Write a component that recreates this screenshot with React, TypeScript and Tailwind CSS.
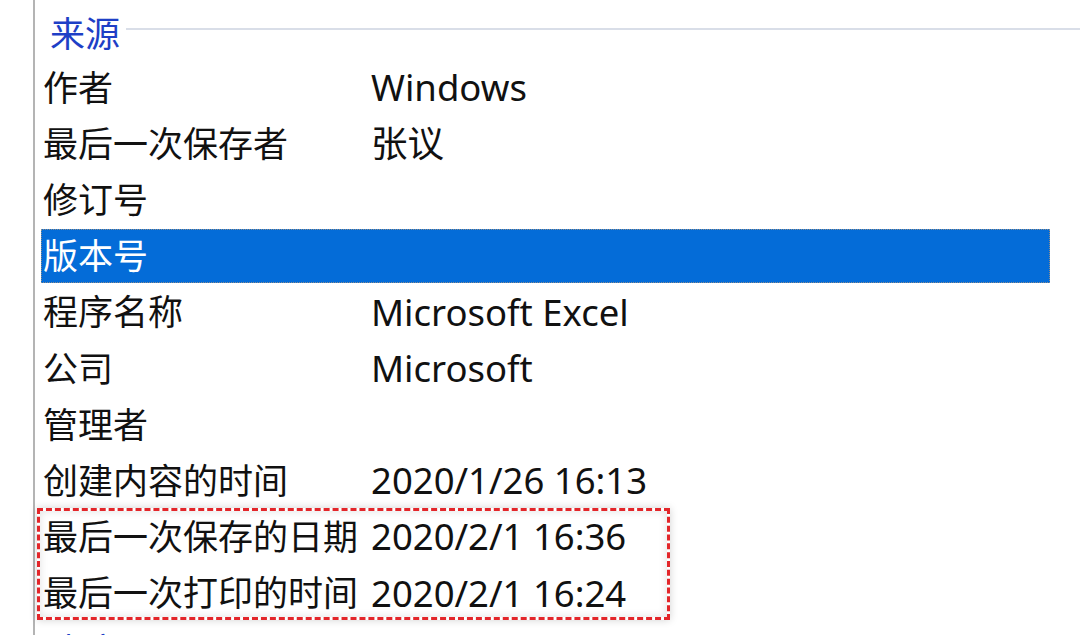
import React from 'react';

const rows: { label: string; value?: string; selected?: boolean }[] = [
  { label: '作者', value: 'Windows' },
  { label: '最后一次保存者', value: '张议' },
  { label: '修订号' },
  { label: '版本号', selected: true },
  { label: '程序名称', value: 'Microsoft Excel' },
  { label: '公司', value: 'Microsoft' },
  { label: '管理者' },
  { label: '创建内容的时间', value: '2020/1/26 16:13' },
];

const marked = [
  { label: '最后一次保存的日期', value: '2020/2/1 16:36' },
  { label: '最后一次打印的时间', value: '2020/2/1 16:24' },
];

const font = { fontFamily: '"Noto Sans", "Noto Sans CJK SC", sans-serif' };

const Row: React.FC<{ label: string; value?: string; selected?: boolean }> = ({ label, value, selected }) => (
  <div className="h-[56.2px] flex items-center">
    <div
      className={
        selected
          ? 'flex items-center w-full h-[54px] bg-[#046cd8] border border-dotted border-[#8c8c8c] text-white'
          : 'flex items-center w-full h-[54px] border border-transparent text-[#111111]'
      }
    >
      <span className="w-[329px] pl-[1px] shrink-0 whitespace-nowrap">{label}</span>
      {value && <span className="whitespace-nowrap text-[36.5px]">{value}</span>}
    </div>
  </div>
);

export default function App() {
  return (
    <div className="w-[1080px] h-[635px] overflow-hidden bg-white text-[35px] leading-none" style={font}>
      <div className="ml-[33px] h-full border-l-2 border-[#b4b4b4] pl-[6px] pr-[30px]">
        {/* Section header */}
        <div className="h-[59px] flex items-start pt-[12px]">
          <span className="pl-[9px] pr-[6px] h-[42px] flex items-center text-[#1e3fc6] whitespace-nowrap">来源</span>
          <div className="flex-1 h-[2px] bg-[#d9dee8] mt-[16px] -mr-[30px]" />
        </div>

        {rows.map((r, i) => (
          <Row key={i} {...r} />
        ))}

        {/* Highlighted rows */}
        <div className="relative">
          {marked.map((r, i) => (
            <Row key={i} {...r} />
          ))}
          <div className="absolute left-[-4px] top-[-1px] w-[633px] h-[112px] border-[3px] border-dashed border-[#e3262a] shadow-[0_0_8px_rgba(0,0,0,0.18),inset_0_0_8px_rgba(0,0,0,0.12)] pointer-events-none" />
        </div>

        <div className="h-[56px] flex items-start pt-[12px]">
          <span className="pl-[10px] text-[#1e3fc6] whitespace-nowrap">内容</span>
        </div>
      </div>
    </div>
  );
}
